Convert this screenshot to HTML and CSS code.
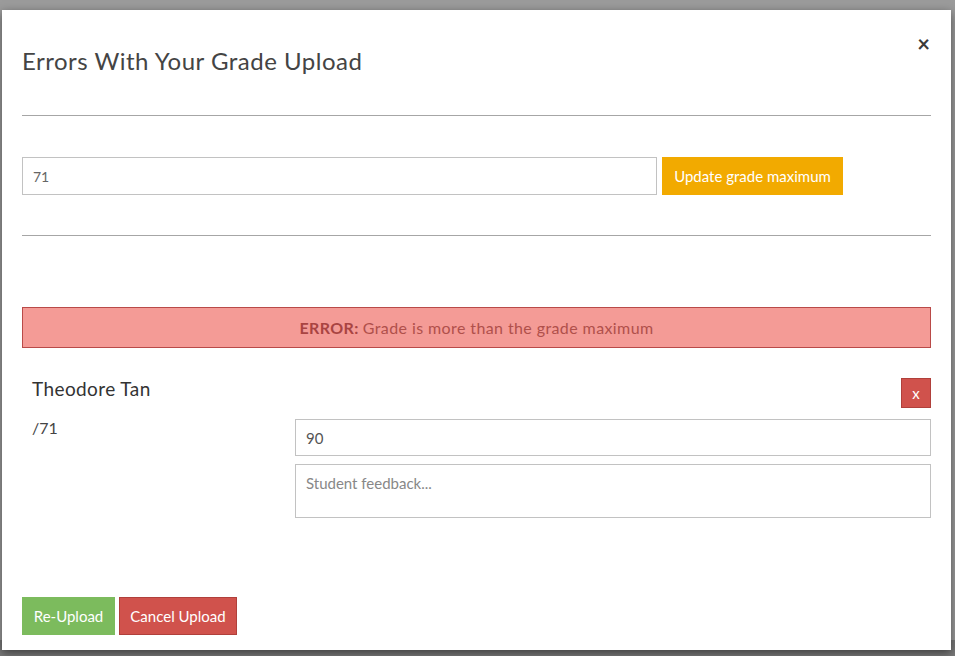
FILE: index.html
```html
<!DOCTYPE html>
<html>
<head>
<meta charset="utf-8">
<link rel="stylesheet" href="styles.css">
</head>
<body>
<div class="backdrop">
  <div class="modal">
    <div class="modal-header">
      <h2 class="title">Errors With Your Grade Upload</h2>
      <span class="close">&times;</span>
    </div>
    <hr class="rule">
    <div class="max-row">
      <input class="field max-input" type="text" value="71">
      <button class="btn btn-warning">Update grade maximum</button>
    </div>
    <hr class="rule rule-2">
    <div class="alert"><strong>ERROR:</strong> Grade is more than the grade maximum</div>
    <div class="student">
      <div class="student-head">
        <span class="name">Theodore Tan</span>
        <button class="btn-x">x</button>
      </div>
      <div class="student-body">
        <div class="max-label">/71</div>
        <div class="inputs">
          <input class="field" type="text" value="90">
          <textarea class="field feedback" placeholder="Student feedback..."></textarea>
        </div>
      </div>
    </div>
    <div class="footer">
      <button class="btn btn-success">Re-Upload</button>
      <button class="btn btn-danger">Cancel Upload</button>
    </div>
  </div>
</div>
</body>
</html>
```
FILE: styles.css
```css
html, body {
  margin: 0;
  padding: 0;
  height: 100%;
}
body {
  background: #999999;
  font-family: Lato, "Open Sans", sans-serif;
  color: #444;
  overflow: hidden;
}
.backdrop {
  padding: 10px 4px 0 2px;
  background: linear-gradient(#9b9b9b, #9b9b9b 640px, #7a7a7a 640px);
  height: 656px;
  box-sizing: border-box;
}
.modal {
  width: 949px;
  height: 640px;
  box-sizing: border-box;
  background: #fff;
  box-shadow: 0 3px 9px rgba(0,0,0,0.5);
  padding: 36px 20px 15px 20px;
  display: flex;
  flex-direction: column;
}
.modal-header {
  display: flex;
  justify-content: space-between;
  align-items: flex-start;
}
.title {
  margin: 0;
  font-size: 24px;
  font-weight: 400;
  line-height: 30px;
  color: #444;
  letter-spacing: 0.5px;
}
.close {
  font-size: 22px;
  font-weight: 700;
  line-height: 1;
  color: #3a3a3a;
  margin-top: -13px;
  margin-right: 1px;
}
.rule {
  border: 0;
  border-top: 1px solid #a6a6a6;
  margin: 39px 0 0 0;
}
.max-row {
  display: flex;
  gap: 5px;
  margin-top: 41px;
}
.field {
  box-sizing: border-box;
  border: 1px solid #c2c2c2;
  height: 38px;
  padding: 6px 10px;
  font-family: Lato, "Open Sans", sans-serif;
  font-size: 15px;
  color: #555;
  background: #fff;
  outline: none;
}
.max-input {
  width: 635px;
  font-size: 14px;
  color: #666;
}
.btn {
  height: 38px;
  border: 1px solid transparent;
  font-family: Lato, "Open Sans", sans-serif;
  font-size: 15px;
  color: #fff;
  padding: 0 8px;
  white-space: nowrap;
  cursor: pointer;
}
.btn-warning {
  background: #f2aa00;
  width: 181px;
}
.rule-2 {
  margin-top: 40px;
}
.alert {
  margin-top: 71px;
  height: 41px;
  box-sizing: border-box;
  background: #f49b96;
  border: 1px solid #b94a48;
  color: #b0504b;
  font-size: 16px;
  letter-spacing: 0.4px;
  display: flex;
  align-items: center;
  justify-content: center;
  gap: 4px;
}
.alert strong {
  font-weight: 700;
  color: #a94442;
}
.student {
  margin-top: 30px;
}
.student-head {
  display: flex;
  justify-content: space-between;
  align-items: center;
  padding-left: 10px;
  height: 30px;
}
.name {
  font-size: 19px;
  color: #333;
  margin-top: -9px;
  letter-spacing: 0.4px;
}
.btn-x {
  width: 30px;
  height: 30px;
  background: #d0524c;
  border: 1px solid #b0403b;
  color: #fff;
  font-family: Lato, sans-serif;
  font-size: 15px;
  padding: 0;
}
.student-body {
  display: grid;
  grid-template-columns: 273px 1fr;
  margin-top: 11px;
}
.max-label {
  padding-left: 10px;
  font-size: 16px;
  color: #444;
  margin-top: -1px;
}
.inputs {
  display: flex;
  flex-direction: column;
  gap: 8px;
}
.inputs .field {
  width: 100%;
  height: 37px;
}
.inputs .feedback {
  height: 54px;
  resize: none;
  font-size: 15px;
  padding-top: 9px;
}
.feedback::placeholder {
  color: #888;
}
.footer {
  margin-top: auto;
  display: flex;
  gap: 4px;
}
.btn-success {
  background: #7cbb5d;
  width: 93px;
}
.btn-danger {
  background: #d0524c;
  border-color: #b0403b;
  width: 118px;
}
```
